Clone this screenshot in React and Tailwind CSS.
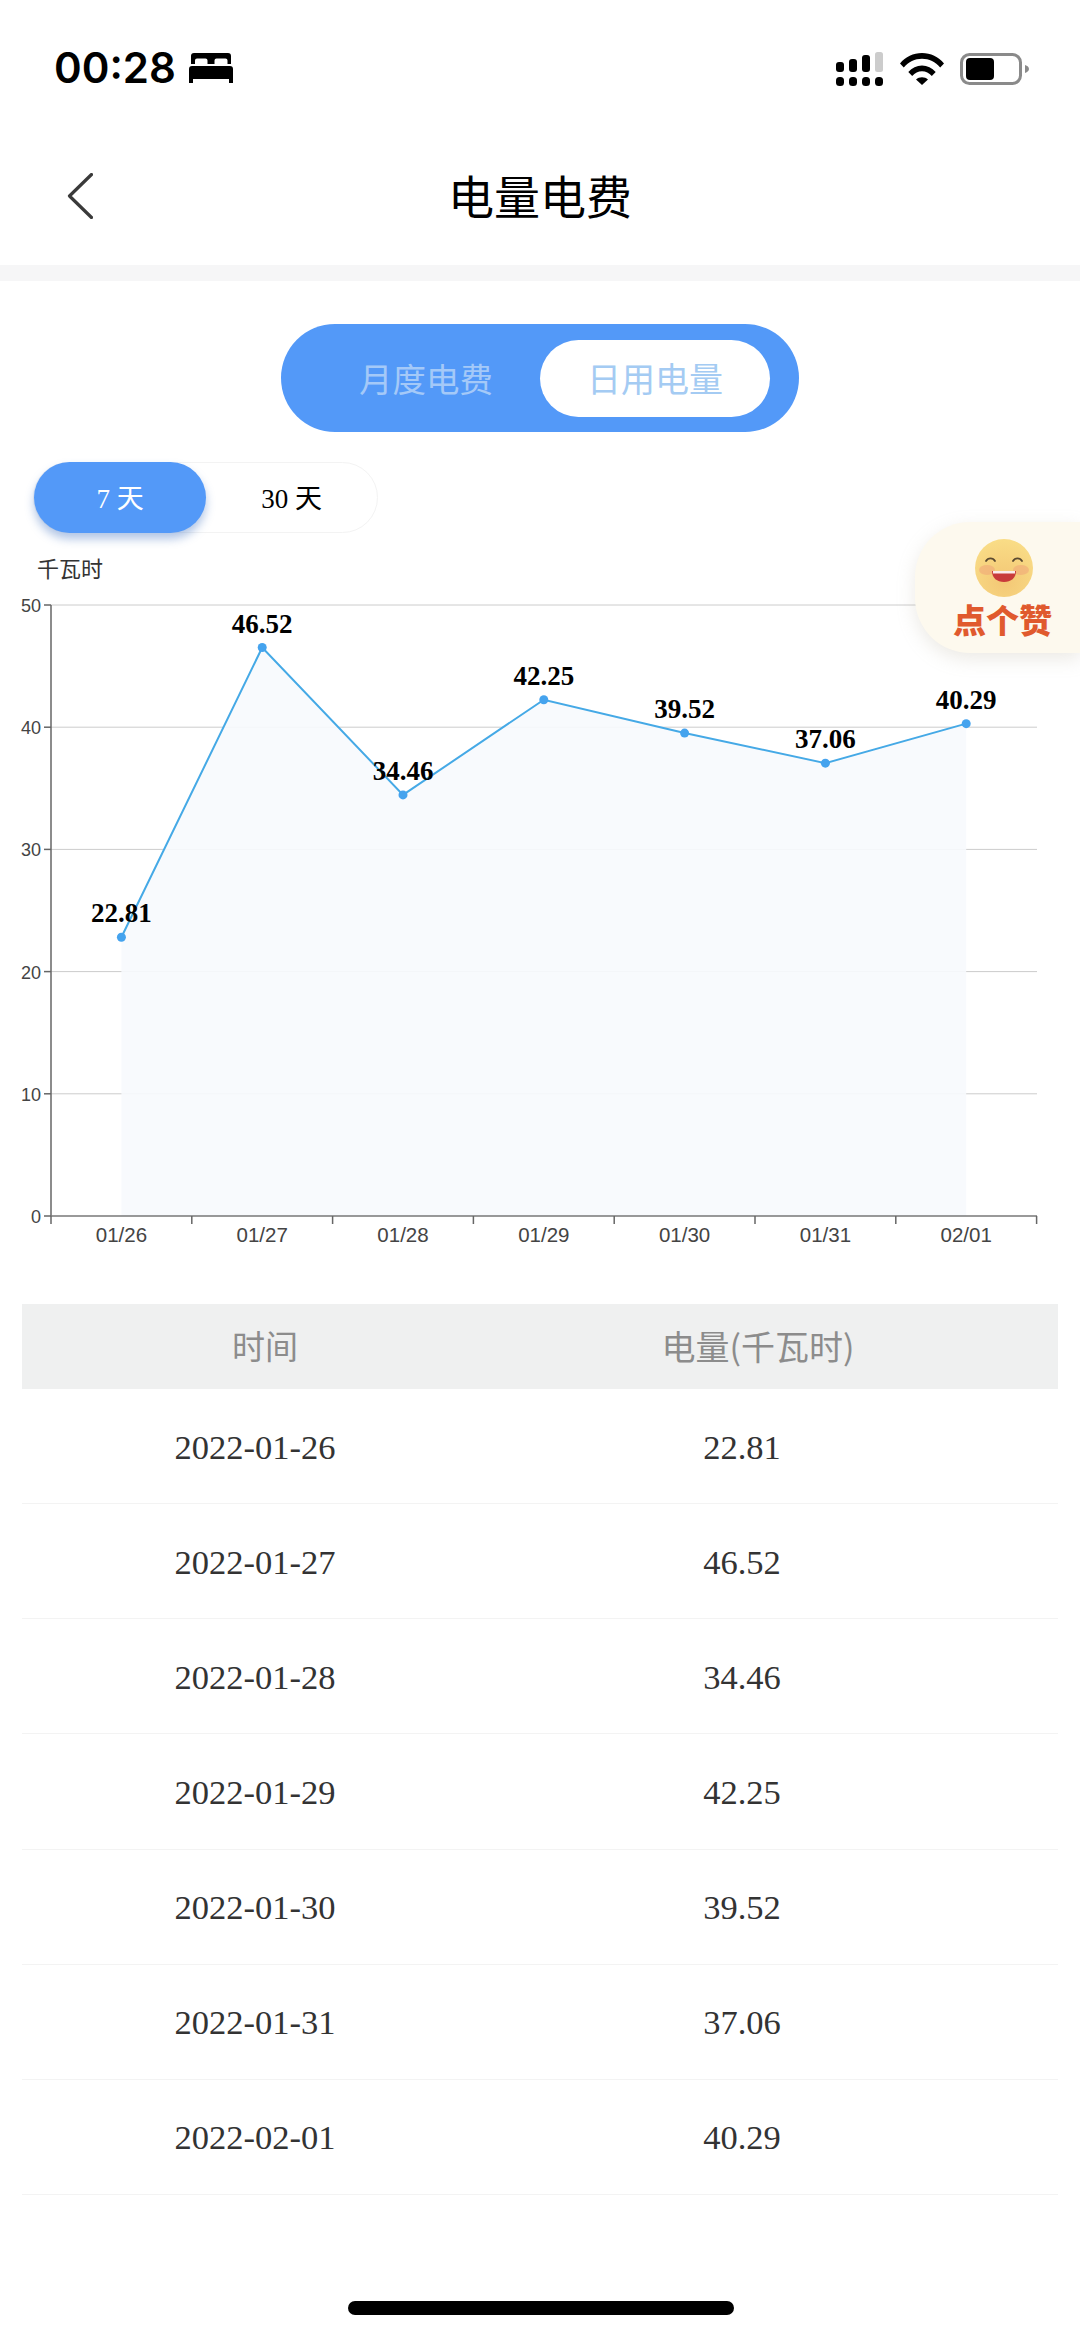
const chartData = [
  { axis: '01/26', date: '2022-01-26', value: 22.81 },
  { axis: '01/27', date: '2022-01-27', value: 46.52 },
  { axis: '01/28', date: '2022-01-28', value: 34.46 },
  { axis: '01/29', date: '2022-01-29', value: 42.25 },
  { axis: '01/30', date: '2022-01-30', value: 39.52 },
  { axis: '01/31', date: '2022-01-31', value: 37.06 },
  { axis: '02/01', date: '2022-02-01', value: 40.29 },
];

const LEFT = 51;
const BAND = 140.8;
const BOTTOM = 1216;
const UNIT = 12.22;

const px = (i) => LEFT + BAND * (i + 0.5);
const py = (v) => BOTTOM - v * UNIT;

function BedIcon() {
  return (
    <svg width="44" height="30" viewBox="0 0 44 30" fill="black">
      <path d="M5 0h34a3 3 0 0 1 3 3v8h-3.500V7.500a2 2 0 0 0-2-2h-9a2 2 0 0 0-2 2V11h-7V7.500a2 2 0 0 0-2-2H8a2 2 0 0 0-2 2V11H2V3a3 3 0 0 1 3-3z" />
      <path d="M3 13h38a3 3 0 0 1 3 3v14h-4v-4H4v4H0V16a3 3 0 0 1 3-3z" />
    </svg>
  );
}

function SignalIcon() {
  return (
    <svg width="48" height="34" viewBox="0 0 48 34">
      <rect x="0" y="10" width="8" height="10" rx="3" fill="black" />
      <rect x="13" y="7" width="8" height="13" rx="3" fill="black" />
      <rect x="26" y="3" width="8" height="17" rx="3" fill="black" />
      <rect x="39" y="0" width="8" height="20" rx="2.500" fill="#cccccc" />
      <rect x="0" y="25" width="8" height="9" rx="3.500" fill="black" />
      <rect x="13" y="25" width="8" height="9" rx="3.500" fill="black" />
      <rect x="26" y="25" width="8" height="9" rx="3.500" fill="black" />
      <rect x="39" y="25" width="8" height="9" rx="3.500" fill="black" />
    </svg>
  );
}

function WifiIcon() {
  return (
    <svg width="44" height="32" viewBox="0 0 44 32" fill="black">
      <path d="M0 10.500C5.500 3.800 13.300 0 22 0s16.500 3.800 22 10.500l-3.800 4C35.500 8.900 29.100 5.800 22 5.800S8.500 8.900 3.800 14.500z" />
      <path d="M8.300 19C12 14.800 16.700 12.500 22 12.500S32 14.800 35.700 19l-3.900 4C29.100 20 25.800 18.300 22 18.300S14.900 20 12.200 23z" />
      <path d="M16 26.500c1.700-1.500 3.700-2.300 6-2.300s4.300.8 6 2.300L22 32z" />
    </svg>
  );
}

function BatteryIcon() {
  return (
    <svg width="70" height="32" viewBox="0 0 70 32">
      <rect x="1.500" y="1.500" width="59" height="29" rx="8" fill="white" stroke="#8a8a8a" strokeWidth="3" />
      <rect x="6" y="5" width="28" height="22" rx="4" fill="black" />
      <path d="M65 12c2.500.8 4 2.200 4 4s-1.500 3.200-4 4z" fill="#8a8a8a" />
    </svg>
  );
}

function SmileFace() {
  return (
    <svg width="60" height="60" viewBox="0 0 60 60">
      <defs>
        <radialGradient id="faceFill" cx="50%" cy="72%" r="70%">
          <stop offset="0%" stopColor="#f3c775" />
          <stop offset="100%" stopColor="#f9dc86" />
        </radialGradient>
      </defs>
      <circle cx="30" cy="30" r="29" fill="url(#faceFill)" />
      <ellipse cx="13" cy="32" rx="8" ry="5" fill="#f0a878" opacity="0.6" />
      <ellipse cx="47" cy="32" rx="8" ry="5" fill="#f0a878" opacity="0.6" />
      <path d="M12 23c2-3.500 7-3.500 9 0" fill="none" stroke="#5b4a30" strokeWidth="1.800" strokeLinecap="round" />
      <path d="M39 23c2-3.500 7-3.500 9 0" fill="none" stroke="#5b4a30" strokeWidth="1.800" strokeLinecap="round" />
      <path d="M18 33h24c0 7-5 11-12 11s-12-4-12-11z" fill="#c83a3a" />
      <path d="M19 33h22v2.500H19z" fill="#ffffff" opacity="0.9" />
    </svg>
  );
}

function Chart() {
  const points = chartData.map((d, i) => `${px(i)},${py(d.value)}`).join(' ');
  const area = `${px(0)},${BOTTOM} ${points} ${px(6)},${BOTTOM}`;
  const ticks = [0, 1, 2, 3, 4, 5, 6, 7];

  return (
    <svg width="1080" height="714" viewBox="0 590 1080 714" className="block">
      {[10, 20, 30, 40, 50].map((v) => (
        <line key={v} x1={LEFT} x2="1037" y1={py(v)} y2={py(v)} stroke="#cccccc" strokeWidth="1" />
      ))}
      <polygon points={area} fill="#f7f9fd" fillOpacity="0.9" />
      <line x1={LEFT} x2={LEFT} y1="605" y2="1216" stroke="#666666" strokeWidth="1.500" />
      <line x1={LEFT} x2="1037" y1={BOTTOM} y2={BOTTOM} stroke="#777777" strokeWidth="1.500" />
      {[0, 10, 20, 30, 40, 50].map((v) => (
        <g key={v}>
          <line x1="44" x2={LEFT} y1={py(v)} y2={py(v)} stroke="#666666" strokeWidth="1.500" />
          <text x="41" y={py(v) + 7} textAnchor="end" fontSize="18" fill="#444444" className="font-['Liberation_Sans',sans-serif]">
            {v}
          </text>
        </g>
      ))}
      {ticks.map((t) => (
        <line key={t} x1={LEFT + BAND * t} x2={LEFT + BAND * t} y1={BOTTOM} y2={BOTTOM + 8} stroke="#666666" strokeWidth="1.500" />
      ))}
      <polyline points={points} fill="none" stroke="#45a9e6" strokeWidth="2" />
      {chartData.map((d, i) => (
        <g key={d.axis}>
          <circle cx={px(i)} cy={py(d.value)} r="4.500" fill="#45a3ee" />
          <text x={px(i)} y="1242" textAnchor="middle" fontSize="20.500" fill="#444444" className="font-['Liberation_Sans',sans-serif]">
            {d.axis}
          </text>
          <text x={px(i)} y={py(d.value) - 15} textAnchor="middle" fontSize="27" fontWeight="700" fill="black" className="font-['Liberation_Serif',serif]">
            {d.value}
          </text>
        </g>
      ))}
    </svg>
  );
}

export default function App() {
  return (
    <div className="relative h-[2337px] w-[1080px] overflow-hidden bg-white font-['Noto_Sans_CJK_SC',sans-serif]">
      {/* Status bar */}
      <div className="flex h-[130px] items-start justify-between pt-[49px]">
        <div className="ml-[54px] flex items-center gap-[13px]">
          <span className="font-['Inter',sans-serif] text-[42px] leading-[38px] font-semibold text-black">00:28</span>
          <BedIcon />
        </div>
        <div className="mr-[50px] flex items-center gap-[16px] pt-[3px]">
          <SignalIcon />
          <WifiIcon />
          <BatteryIcon />
        </div>
      </div>

      {/* Nav */}
      <div className="relative flex h-[135px] items-start justify-center">
        <svg width="26" height="46" viewBox="0 0 26 46" className="absolute top-[43px] left-[67px]">
          <path d="M24.500 1.500 2.500 23l22 21.500" fill="none" stroke="#3a3a3a" strokeWidth="3.200" strokeLinecap="round" strokeLinejoin="round" />
        </svg>
        <h1 className="mt-[32px] text-[46px] leading-[64px] font-normal text-black">电量电费</h1>
      </div>
      <div className="h-[16px] bg-[#f6f6f7]" />

      {/* Bill type switch */}
      <div className="mt-[43px] flex justify-center">
        <div className="flex h-[108px] w-[518px] items-center rounded-full bg-[#5399f8]">
          <span className="ml-[78px] w-[181px] text-[33.500px] leading-none text-[#a4c9f8]">月度电费</span>
          <div className="flex h-[77px] w-[230px] items-center justify-center rounded-full bg-white text-[34px] leading-none text-[#a4cbf3]">
            日用电量
          </div>
        </div>
      </div>

      {/* Range switch */}
      <div className="mt-[30px] ml-[33px] flex h-[71px] w-[345px] items-center rounded-full border border-[#f3f3f3] font-['Liberation_Serif','Noto_Sans_CJK_SC',serif] text-[27px]">
        <div className="flex h-[71px] w-[172px] items-center justify-center rounded-full bg-[#5399f8] pt-[3px] text-white shadow-[0_6px_10px_rgba(60,110,190,0.4)]">
          7 天
        </div>
        <div className="flex-1 pt-[3px] text-center text-black">30 天</div>
      </div>

      <div className="mt-[19px] ml-[37px] text-[22px] leading-[30px] text-[#333333]">千瓦时</div>
      <div className="mt-[8px]">
        <Chart />
      </div>

      {/* Table */}
      <div className="mx-[22px] grid h-[85px] grid-cols-[486px_500px] items-center bg-[#eff0f0] pb-[2px] text-center text-[33px] text-[#8c8c8c]">
        <span>时间</span>
        <span className="text-[34px]">电量(千瓦时)</span>
      </div>
      {chartData.map((d) => (
        <div
          key={d.date}
          className="mx-[22px] grid h-[115.140px] grid-cols-[466px_508px] items-center border-b border-[#f3f3f3] pt-[3px] text-center font-['Liberation_Serif',serif] text-[34.500px] text-[#333333]"
        >
          <span>{d.date}</span>
          <span>{d.value}</span>
        </div>
      ))}

      {/* Like badge */}
      <div className="absolute top-[522px] left-[915px] flex h-[131px] w-[165px] flex-col items-start rounded-l-[55px] bg-[#fdf9ee] pt-[16px] pl-[59px] shadow-[0_6px_18px_rgba(180,170,150,0.25)]">
        <SmileFace />
        <span className="-ml-[21px] mt-[3px] whitespace-nowrap text-[33px] leading-[36px] font-black text-[#e05a2e]">点个赞</span>
      </div>

      {/* Home indicator */}
      <div className="absolute top-[2301px] left-[348px] h-[14px] w-[386px] rounded-full bg-black" />
    </div>
  );
}
